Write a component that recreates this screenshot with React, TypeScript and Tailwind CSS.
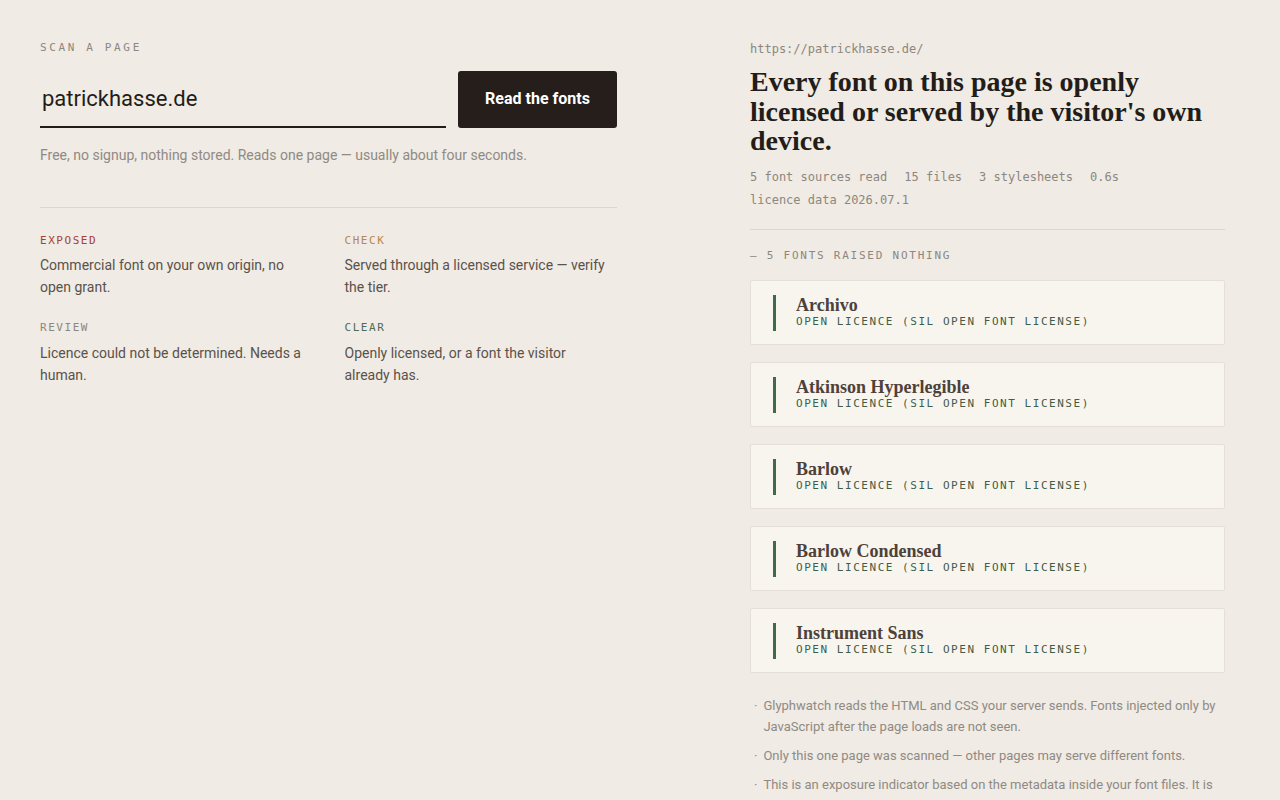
const LEGEND = [
  { label: 'EXPOSED', tone: 'text-[#a8402f]', desc: 'Commercial font on your own origin, no open grant.' },
  { label: 'CHECK', tone: 'text-[#b8894a]', desc: 'Served through a licensed service — verify the tier.' },
  { label: 'REVIEW', tone: 'text-[#8c877f]', desc: 'Licence could not be determined. Needs a human.' },
  { label: 'CLEAR', tone: 'text-[#4f6b57]', desc: 'Openly licensed, or a font the visitor already has.' },
];

const FONTS = ['Archivo', 'Atkinson Hyperlegible', 'Barlow', 'Barlow Condensed', 'Instrument Sans'];

const STATS = ['5 font sources read', '15 files', '3 stylesheets', '0.6s'];

const NOTES = [
  'Glyphwatch reads the HTML and CSS your server sends. Fonts injected only by JavaScript after the page loads are not seen.',
  'Only this one page was scanned — other pages may serve different fonts.',
  'This is an exposure indicator based on the metadata inside your font files. It is not legal advice, and a clear result is not a guarantee.',
  'Licence data can be out of date. Check the foundry terms before you rely on a result.',
];

const sans = 'font-["Roboto",_"Liberation_Sans",_sans-serif]';
const mono = 'font-["DejaVu_Sans_Mono",_"Liberation_Mono",_monospace]';
const serif = 'font-["Liberation_Serif",_serif]';

const App = () => {
  return (
    <div className={`min-h-screen bg-[#f0ebe4] text-[#2a221d] ${sans}`}>
      <div className="grid grid-cols-[577px_475px] justify-between pt-10 pr-[55px] pb-24 pl-10">
        {/* Scan form */}
        <div>
          <p className={`text-[11px] tracking-[0.24em] text-[#8c877f] ${mono}`}>SCAN A PAGE</p>
          <div className="mt-[14px] flex items-end gap-3">
            <div className="flex h-[57px] flex-1 items-center border-b-2 border-[#231d19] px-0.5">
              <span className="text-[22px] text-[#231d19]">patrickhasse.de</span>
            </div>
            <button className="h-[57px] w-[159px] rounded-[3px] bg-[#251e1a] text-[16px] font-bold text-white">
              Read the fonts
            </button>
          </div>
          <p className="mt-[17px] text-[14px] text-[#8f8a83]">
            Free, no signup, nothing stored. Reads one page — usually about four seconds.
          </p>
          <div className="mt-[41px] border-t border-[#dcd6cc]" />
          <div className="mt-[25px] grid grid-cols-2 gap-x-[32px] gap-y-[22px]">
            {LEGEND.map((item) => (
              <div key={item.label}>
                <p className={`text-[11px] tracking-[0.14em] ${item.tone} ${mono}`}>{item.label}</p>
                <p className="mt-[5px] pr-2 text-[14px] leading-[22px] text-[#5a524b]">{item.desc}</p>
              </div>
            ))}
          </div>
        </div>

        {/* Result */}
        <div>
          <p className={`text-[12px] text-[#8c877f] ${mono}`}>https://patrickhasse.de/</p>
          <h1 className={`mt-[9px] text-[28px] leading-[29.5px] font-bold text-[#231d19] ${serif}`}>
            Every font on this page is openly licensed or served by the visitor's own device.
          </h1>
          <div className={`mt-[10px] flex flex-wrap gap-x-[17px] text-[12px] leading-[23px] text-[#8c877f] ${mono}`}>
            {STATS.map((s) => (
              <span key={s}>{s}</span>
            ))}
          </div>
          <p className={`text-[12px] leading-[23px] text-[#8c877f] ${mono}`}>licence data 2026.07.1</p>
          <div className="mt-[17px] border-t border-[#dcd6cc]" />
          <p className={`mt-[18px] text-[11px] tracking-[0.16em] text-[#8c877f] ${mono}`}>— 5 FONTS RAISED NOTHING</p>
          <div className="mt-[16px] flex flex-col gap-[17px]">
            {FONTS.map((name) => (
              <div
                key={name}
                className="flex h-[65px] items-center gap-5 rounded-[2px] border border-[#e5dfd5] bg-[#f8f5ef] px-[22px]"
              >
                <div className="h-[36px] w-[3px] bg-[#3f6b4c]" />
                <div>
                  <p className={`text-[18px] leading-[19px] font-bold text-[#4d4139] ${serif}`}>{name}</p>
                  <p className={`text-[11px] leading-[14px] tracking-[0.14em] text-[#3f5e48] ${mono}`}>
                    OPEN LICENCE (SIL OPEN FONT LICENSE)
                  </p>
                </div>
              </div>
            ))}
          </div>
          <ul className="mt-[22px] flex flex-col gap-2">
            {NOTES.map((n) => (
              <li key={n} className="flex gap-[6px] pl-1 text-[13px] leading-[21px] text-[#8f8a83]">
                <span>·</span>
                <span>{n}</span>
              </li>
            ))}
          </ul>
        </div>
      </div>
    </div>
  );
};

export default App;
